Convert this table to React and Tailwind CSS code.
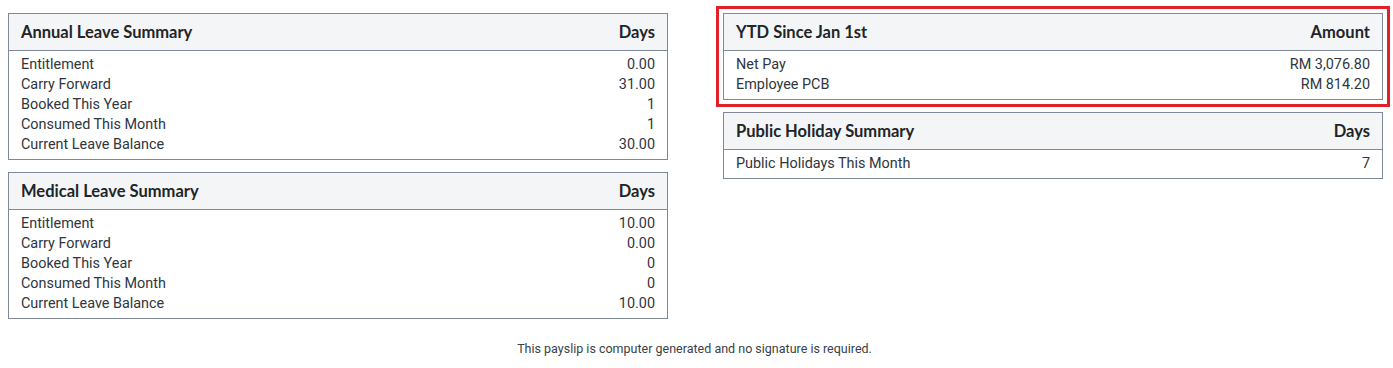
const LEFT = [
  {
    title: 'Annual Leave Summary',
    unit: 'Days',
    rows: [
      ['Entitlement', '0.00'],
      ['Carry Forward', '31.00'],
      ['Booked This Year', '1'],
      ['Consumed This Month', '1'],
      ['Current Leave Balance', '30.00'],
    ],
  },
  {
    title: 'Medical Leave Summary',
    unit: 'Days',
    rows: [
      ['Entitlement', '10.00'],
      ['Carry Forward', '0.00'],
      ['Booked This Year', '0'],
      ['Consumed This Month', '0'],
      ['Current Leave Balance', '10.00'],
    ],
  },
];

const YTD = {
  title: 'YTD Since Jan 1st',
  unit: 'Amount',
  rows: [
    ['Net Pay', 'RM 3,076.80'],
    ['Employee PCB', 'RM 814.20'],
  ],
};

const HOLIDAY = {
  title: 'Public Holiday Summary',
  unit: 'Days',
  rows: [['Public Holidays This Month', '7']],
};

function SummaryBox({ data, highlight }) {
  return (
    <div
      className={`w-[660px] border border-[#7f899a] bg-white ${
        highlight ? 'outline-[3px] outline-solid outline-[#e3202a] outline-offset-[4px]' : ''
      }`}
    >
      <div className="flex items-center justify-between h-[37px] px-[12px] bg-[#f4f5f7] border-b border-[#7f899a] font-['Lato',sans-serif] font-bold text-[16.5px] text-[#212529]">
        <span>{data.title}</span>
        <span>{data.unit}</span>
      </div>
      <div className="px-[12px] py-[4px] font-['Roboto',sans-serif] text-[14.4px] leading-[20px] text-[#2f3640]">
        {data.rows.map(([label, value]) => (
          <div key={label} className="flex justify-between">
            <span>{label}</span>
            <span>{value}</span>
          </div>
        ))}
      </div>
    </div>
  );
}

export default function App() {
  return (
    <div className="w-full bg-white pt-[13px]">
      <div className="flex pl-[8px] gap-[55px]">
        <div className="flex flex-col gap-[12px]">
          {LEFT.map((d) => (
            <SummaryBox key={d.title} data={d} />
          ))}
        </div>
        <div className="flex flex-col gap-[12px]">
          <SummaryBox data={YTD} highlight />
          <SummaryBox data={HOLIDAY} />
        </div>
      </div>
      <p className="mt-[22px] pr-[4px] text-center font-['Roboto',sans-serif] text-[12.5px] leading-[16px] text-[#3a3f47]">
        This payslip is computer generated and no signature is required.
      </p>
    </div>
  );
}
